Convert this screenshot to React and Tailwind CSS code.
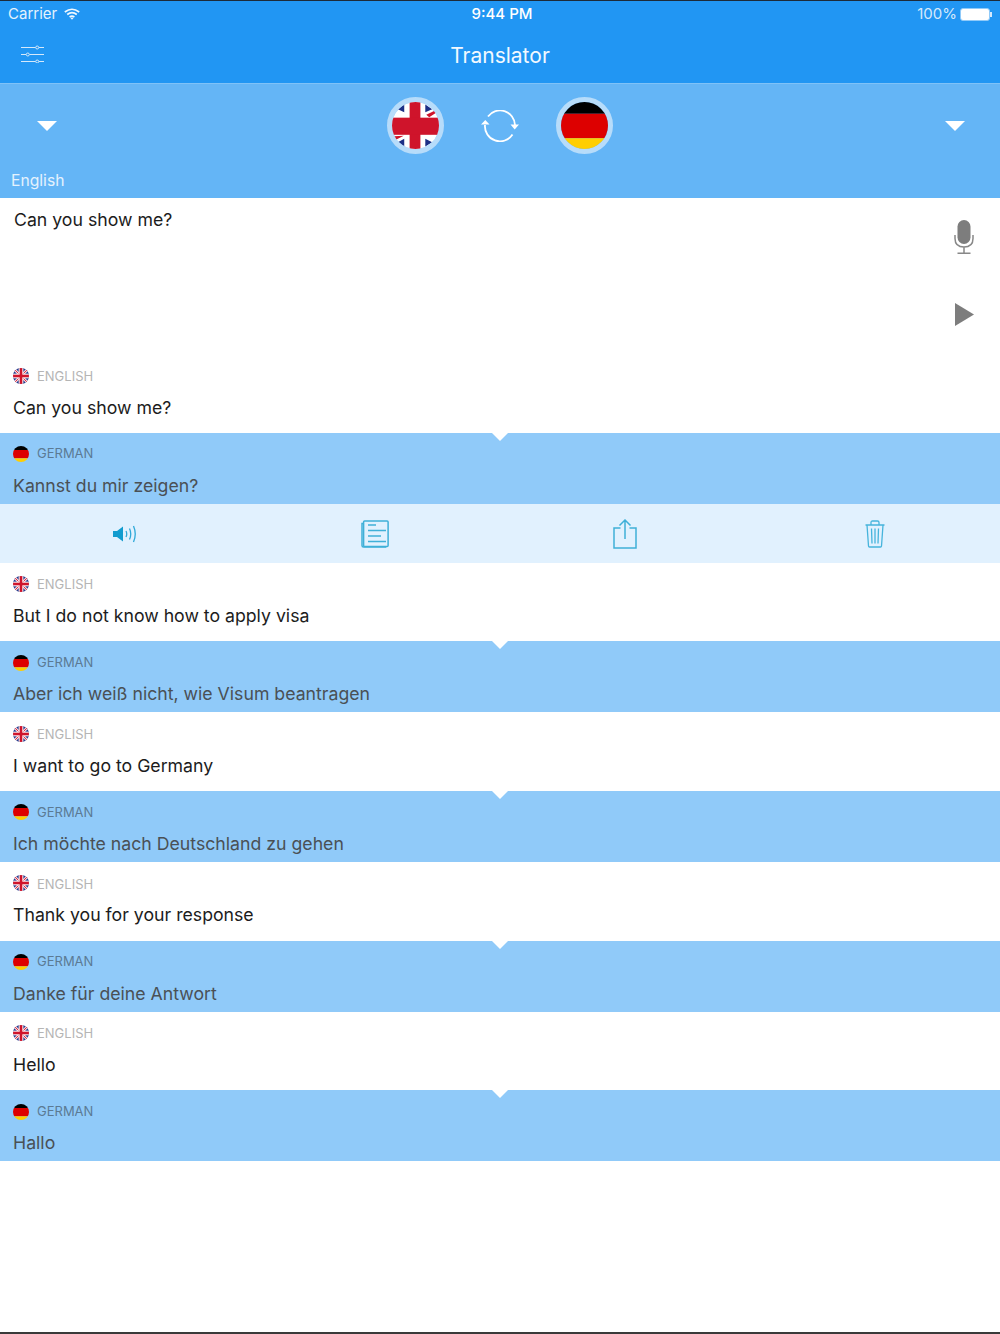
import { useId } from 'react';

const rows = [
  { en: 'Can you show me?', de: 'Kannst du mir zeigen?', actions: true },
  { en: 'But I do not know how to apply visa', de: 'Aber ich weiß nicht, wie Visum beantragen' },
  { en: 'I want to go to Germany', de: 'Ich möchte nach Deutschland zu gehen' },
  { en: 'Thank you for your response', de: 'Danke für deine Antwort' },
  { en: 'Hello', de: 'Hallo' },
];

function BigUkFlag() {
  const id = useId();
  return (
    <svg width="47" height="47" viewBox="0 0 48 48" className="block">
      <clipPath id={id}><circle cx="24" cy="24" r="24" /></clipPath>
      <g clipPath={`url(#${id})`}>
        <rect width="48" height="48" fill="#fff" />
        <path d="M12.500 2.500V10.500L6 7.500Z M34 2.500V10.500L41 7.500Z M12.500 45.500V37.500L6 41Z M34 45.500V37.500L41 41Z" fill="#1b2f86" />
        <path d="M35 13L43.500 9L45 11L38 15.500Z M2 35L12 34.500L4 38.500Z" fill="#cf142b" />
        <rect x="18" width="11" height="48" fill="#cf142b" />
        <rect y="16" width="48" height="17.500" fill="#cf142b" />
      </g>
    </svg>
  );
}

function SmallUkFlag() {
  const id = useId();
  return (
    <svg width="16" height="16" viewBox="0 0 48 48" className="block -translate-y-[1px]">
      <clipPath id={id}><circle cx="24" cy="24" r="24" /></clipPath>
      <g clipPath={`url(#${id})`}>
        <rect width="48" height="48" fill="#26398c" />
        <path d="M0 0L48 48M48 0L0 48" stroke="#f4d5da" strokeWidth="8" />
        <path d="M0 0L48 48M48 0L0 48" stroke="#d8304a" strokeWidth="3" />
        <rect x="17" width="14" height="48" fill="#fff" />
        <rect y="17" width="48" height="14" fill="#fff" />
        <rect x="20" width="8" height="48" fill="#cf142b" />
        <rect y="20" width="48" height="8" fill="#cf142b" />
      </g>
    </svg>
  );
}

function DeFlag({ size }) {
  const id = useId();
  return (
    <svg width={size} height={size} viewBox="0 0 48 48" className="block">
      <clipPath id={id}><circle cx="24" cy="24" r="24" /></clipPath>
      <g clipPath={`url(#${id})`}>
        <rect width="48" height="12" fill="#000" />
        <rect y="12" width="48" height="25" fill="#dd0000" />
        <rect y="37" width="48" height="11" fill="#ffce00" />
      </g>
    </svg>
  );
}

function BigFlag({ children }) {
  return <div className="rounded-full border-[5px] border-[#b7dcfa]">{children}</div>;
}

function Caret() {
  return <div className="w-0 h-0 border-x-[10px] border-x-transparent border-t-[10px] border-t-white" />;
}

function WifiIcon() {
  return (
    <svg width="16" height="12" viewBox="0 0 16 12" fill="none" stroke="#f0f8ff" strokeWidth="1.700">
      <path d="M0.800 4Q8 -1.500 15.200 4M3.200 6.500Q8 2.800 12.800 6.500M5.600 9Q8 7.200 10.400 9" />
      <path d="M6.500 10L8 11.800L9.500 10Q8 8.900 6.500 10Z" fill="#f0f8ff" stroke="none" />
    </svg>
  );
}

function SettingsIcon() {
  return (
    <svg width="23" height="18" viewBox="0 0 23 18" fill="none" stroke="#d5e9fb" strokeWidth="1">
      <path d="M0 2.500H14.500M18 2.500H23M0 9.500H5M8.500 9.500H23M0 16.500H14.500M18 16.500H23" />
      <circle cx="16.200" cy="2.500" r="1.500" />
      <circle cx="6.800" cy="9.500" r="1.500" />
      <circle cx="16.200" cy="16.500" r="1.500" />
    </svg>
  );
}

function SwapIcon() {
  return (
    <svg width="38" height="32" viewBox="0 0 38 32" fill="none">
      <path d="M7 6.500A15 15 0 0 1 34 15" stroke="#fff" strokeWidth="1.800" />
      <path d="M31.500 24.500A15 15 0 0 1 4 15" stroke="#fff" strokeWidth="1.800" />
      <path d="M0 14.500L4.300 10L8.500 14.500Z M29.500 14.500H38L33.700 19.500Z" fill="#fff" />
    </svg>
  );
}

function SpeakerIcon() {
  return (
    <svg width="24" height="18" viewBox="0 0 24 18" fill="none" stroke="#2fa9d8" strokeWidth="1.300">
      <path d="M0 6H4L10 1.500V16.500L4 12H0Z" fill="#129ccf" stroke="none" />
      <path d="M13 6Q14.500 9 13 12M16.500 3.500Q19 9 16.500 14.500M20.500 1Q24 9 20.500 17" />
    </svg>
  );
}

function NotesIcon() {
  return (
    <svg width="28" height="28" viewBox="0 0 28 28" fill="none" stroke="#3fb0d8" strokeWidth="1.500">
      <rect x="2.600" y="1" width="24.500" height="25.500" rx="1" />
      <path d="M2.600 3.500H1V25.500Q1 27 2.500 27H24.500V26.500" />
      <path d="M7 5H15M7 10.500H25M7 16H20M7 21.500H25" />
    </svg>
  );
}

function ShareIcon() {
  return (
    <svg width="24" height="30" viewBox="0 0 24 30" fill="none" stroke="#3fb0d8" strokeWidth="1.500">
      <path d="M7.500 9H1V29H23V9H16.500" />
      <path d="M12 1V20M6.500 6.500L12 1L17.500 6.500" />
    </svg>
  );
}

function TrashIcon() {
  return (
    <svg width="20" height="28" viewBox="0 0 20 28" fill="none" stroke="#46b4dc" strokeWidth="1.300">
      <path d="M0.500 5H19.500M6 5V2.500Q6 1 7.500 1H12.500Q14 1 14 2.500V5" />
      <path d="M2 5L3.500 26Q3.600 27 4.500 27H15.500Q16.400 27 16.500 26L18 5" />
      <path d="M6.500 8.500L7 23.500M10 8.500V23.500M13.500 8.500L13 23.500" />
    </svg>
  );
}

function EnglishRow({ text }) {
  return (
    <div className="h-[78.67px] bg-white flex flex-col pl-[13px] pt-[13.5px]">
      <div className="flex items-center gap-2 h-[18px]">
        <SmallUkFlag />
        <span className="text-[13px] text-[#b5b5b5]">ENGLISH</span>
      </div>
      <div className="mt-[10px] text-[17.7px] leading-[24px] text-[#1c1c1c]">{text}</div>
    </div>
  );
}

function GermanRow({ text }) {
  return (
    <div className="relative h-[71px] bg-[#90caf9] flex flex-col pl-[13px] pt-[12.5px]">
      <div className="absolute top-0 left-1/2 -translate-x-1/2 w-0 h-0 border-x-[8px] border-x-transparent border-t-[8px] border-t-white" />
      <div className="flex items-center gap-2 h-[18px]">
        <DeFlag size={16} />
        <span className="text-[13px] text-[#5b7a94]">GERMAN</span>
      </div>
      <div className="mt-[10.5px] text-[17.7px] leading-[24px] text-[#4a5055]">{text}</div>
    </div>
  );
}

function ActionBar() {
  return (
    <div className="h-[59px] pt-[2px] bg-[#e1f1fe] grid grid-cols-4">
      <div className="flex items-center justify-center"><SpeakerIcon /></div>
      <div className="flex items-center justify-center"><NotesIcon /></div>
      <div className="flex items-center justify-center"><ShareIcon /></div>
      <div className="flex items-center justify-center"><TrashIcon /></div>
    </div>
  );
}

export default function App() {
  return (
    <div className="h-[1334px] flex flex-col bg-white border-t border-[#1d2a38] border-b-2 border-b-[#3a3a3a] overflow-hidden font-['Inter','Liberation_Sans',sans-serif]">
      <div className="h-[82px] shrink-0 bg-[#2196f3] text-white flex flex-col">
        <div className="h-[26px] px-2 grid grid-cols-3 items-center text-[15px]">
          <div className="flex items-center gap-[7px] text-[#e4f2fd]">
            Carrier
            <WifiIcon />
          </div>
          <div className="text-center font-medium text-[15px] pl-[4px]">9:44 PM</div>
          <div className="flex items-center justify-end gap-[3px] text-[#d5e9fb]">
            100%
            <div className="flex items-center">
              <div className="w-[30px] h-[13px] rounded-[3px] bg-white border border-[#90caf9]" />
              <div className="w-[2px] h-[5px] bg-[#d5e9fb]" />
            </div>
          </div>
        </div>
        <div className="relative flex-1 flex items-center justify-center pt-[1px]">
          <div className="absolute left-[21px] top-[18px]"><SettingsIcon /></div>
          <span className="text-[21px] text-[#f2f9ff]">Translator</span>
        </div>
      </div>

      <div className="h-[115px] shrink-0 bg-[#64b5f6] border-t border-[#7fc2f8] flex flex-col">
        <div className="flex items-start justify-between pl-[37px] pr-[35px] pt-[13px]">
          <div className="pt-[24px]"><Caret /></div>
          <div className="flex items-center gap-[37px] mr-[2px]">
            <BigFlag><BigUkFlag /></BigFlag>
            <SwapIcon />
            <BigFlag><DeFlag size={47} /></BigFlag>
          </div>
          <div className="pt-[24px]"><Caret /></div>
        </div>
        <div className="pl-[11px] mt-[17px] text-[15.7px] leading-[20px] text-[#e4f2fd]">English</div>
      </div>

      <div className="h-[156px] shrink-0 bg-white flex justify-between pl-[14px] pr-[26px] pt-[10px]">
        <div className="text-[17.7px] leading-[24px] text-[#1c1c1c]">Can you show me?</div>
        <div className="flex flex-col items-center">
          <svg width="20" height="34" viewBox="0 0 20 34" className="mt-[12px]" fill="none" stroke="#888" strokeWidth="1.500">
            <rect x="3.500" y="0" width="13" height="24" rx="6.500" fill="#7d7d7d" stroke="none" />
            <path d="M1 15V18.500Q1 27 10 27Q19 27 19 18.500V15M10 27V33M3.500 33.300H16.500" />
          </svg>
          <svg width="20" height="24" viewBox="0 0 20 24" className="mt-[49px]">
            <path d="M1 0L20 11.500L1 23Z" fill="#7d7d7d" />
          </svg>
        </div>
      </div>

      {rows.map((row) => (
        <div key={row.en}>
          <EnglishRow text={row.en} />
          <GermanRow text={row.de} />
          {row.actions && <ActionBar />}
        </div>
      ))}
    </div>
  );
}
